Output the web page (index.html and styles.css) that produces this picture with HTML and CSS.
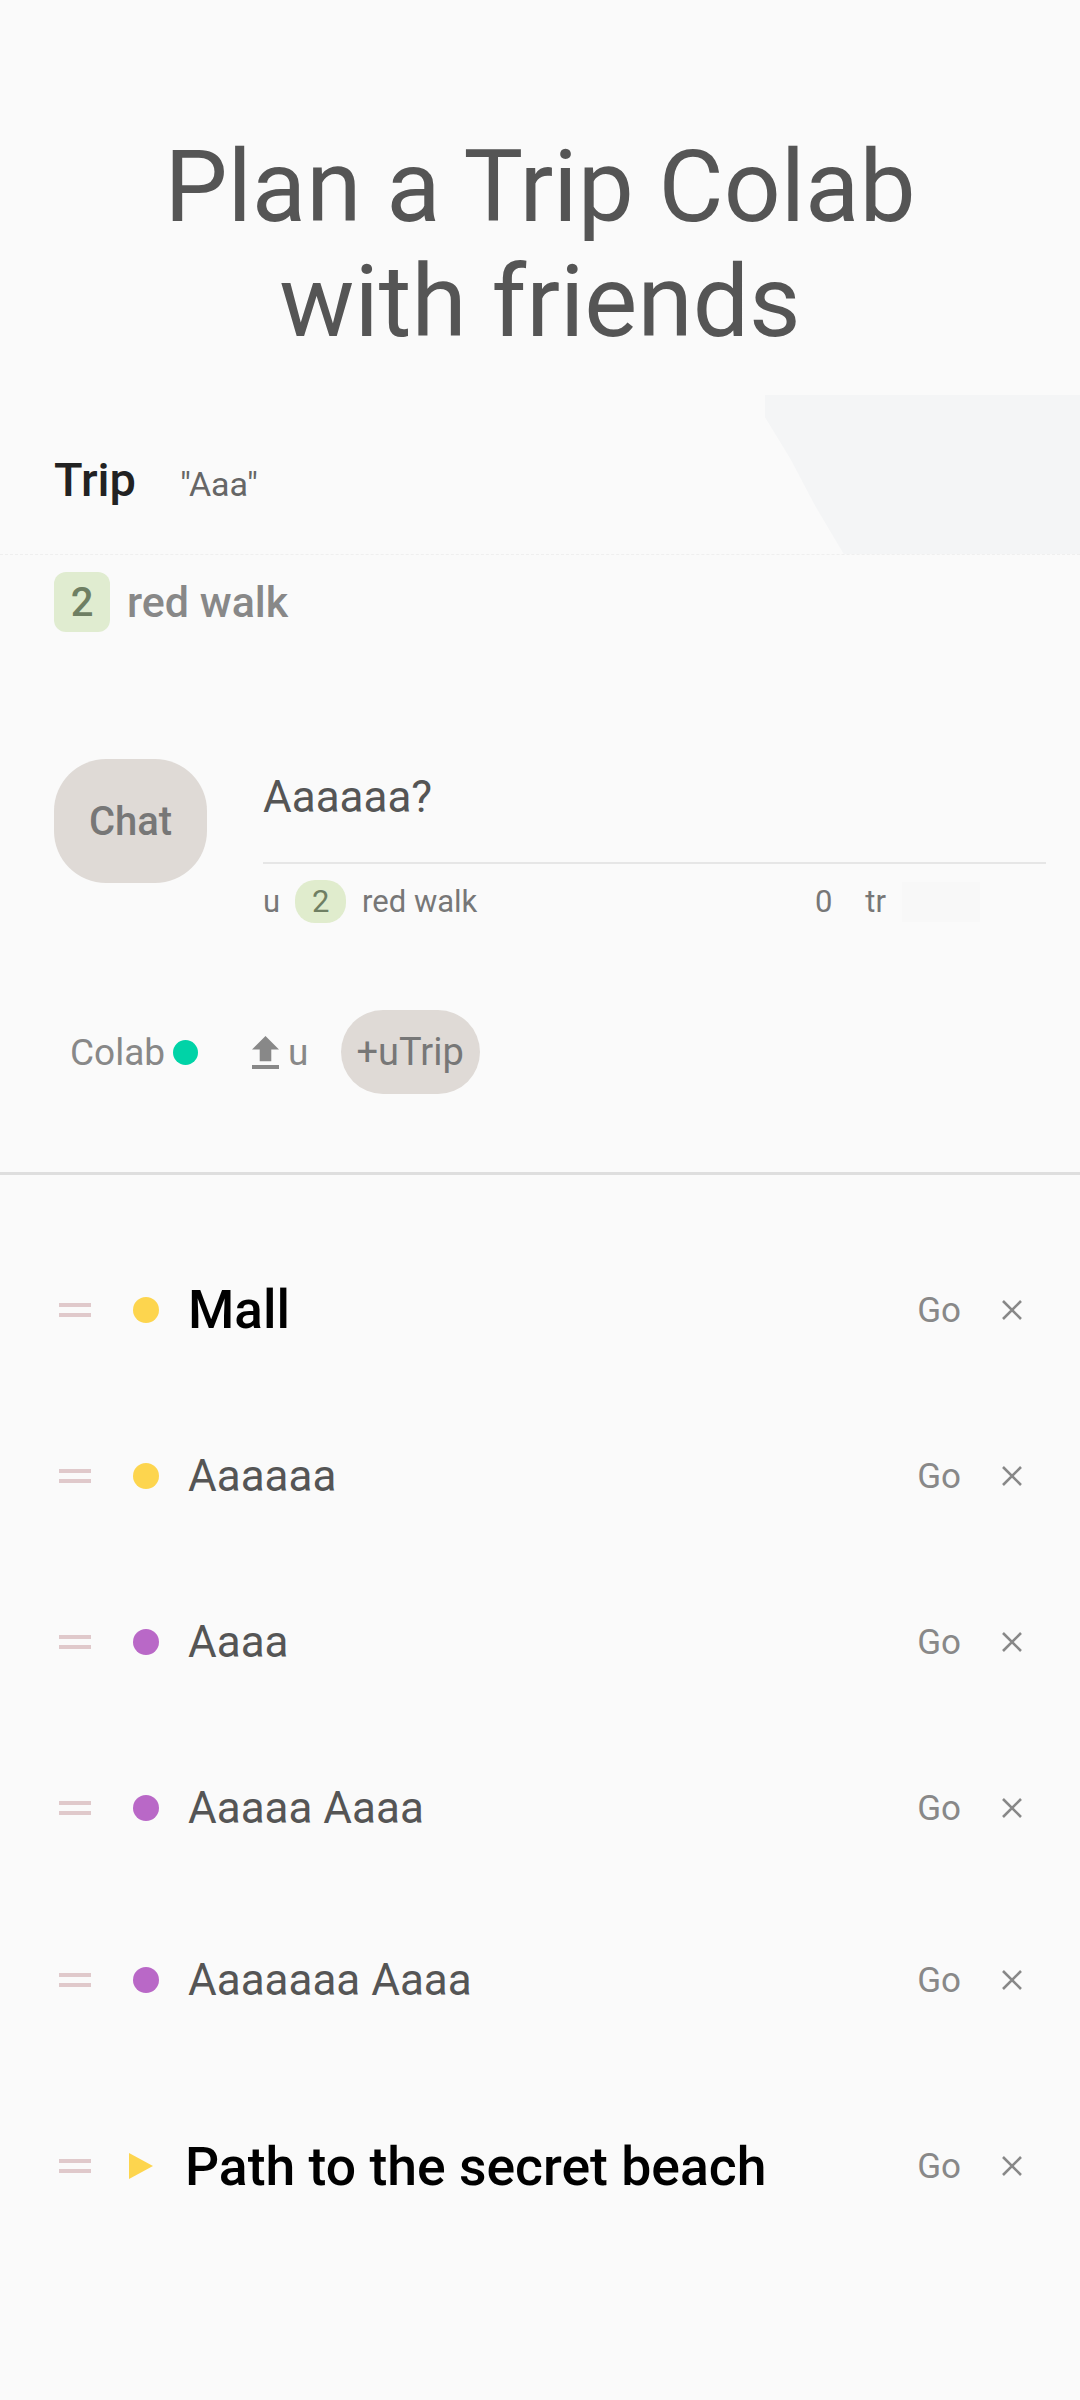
FILE: index.html
```html
<!DOCTYPE html>
<html lang="en">
<head>
<meta charset="utf-8">
<title>Plan a Trip Colab</title>
<link rel="stylesheet" href="styles.css">
</head>
<body>
<main class="page">
  <h1 class="title">Plan a Trip Colab<br>with friends</h1>

  <section class="trip">
    <div class="trip-inner">
      <span class="trip-label">Trip</span>
      <span class="trip-name">"Aaa"</span>
    </div>
  </section>

  <div class="route">
    <span class="num">2</span>
    <span class="route-name">red walk</span>
  </div>

  <div class="chat-row">
    <button class="chat-btn">Chat</button>
    <div class="chat-col">
      <div class="chat-input">Aaaaaa?</div>
      <div class="chat-meta">
        <span>u</span>
        <span class="num-sm">2</span>
        <span class="meta-route">red walk</span>
        <span class="meta-count">0</span>
        <span class="meta-tr">tr</span>
        <span class="meta-blank"></span>
      </div>
    </div>
  </div>

  <div class="actions">
    <span class="colab">Colab</span>
    <span class="live-dot"></span>
    <svg class="upload" viewBox="5 3 14 17" width="27" height="33" aria-hidden="true"><path d="M9 16h6v-6h4l-7-7-7 7h4zm-4 2h14v2H5z" fill="#888"/></svg>
    <span class="upload-u">u</span>
    <span class="pill">+uTrip</span>
  </div>

  <div class="divider"></div>

  <ul class="list">
    <li class="item">
      <span class="handle"></span>
      <span class="dot yellow"></span>
      <span class="name strong">Mall</span>
      <span class="go">Go</span>
      <svg class="close" viewBox="0 0 22 22" width="22" height="22" aria-hidden="true"><path d="M2 2L20 20M20 2L2 20" stroke="#888" stroke-width="2.6" fill="none"/></svg>
    </li>
    <li class="item">
      <span class="handle"></span>
      <span class="dot yellow"></span>
      <span class="name">Aaaaaa</span>
      <span class="go">Go</span>
      <svg class="close" viewBox="0 0 22 22" width="22" height="22" aria-hidden="true"><path d="M2 2L20 20M20 2L2 20" stroke="#888" stroke-width="2.6" fill="none"/></svg>
    </li>
    <li class="item">
      <span class="handle"></span>
      <span class="dot purple"></span>
      <span class="name">Aaaa</span>
      <span class="go">Go</span>
      <svg class="close" viewBox="0 0 22 22" width="22" height="22" aria-hidden="true"><path d="M2 2L20 20M20 2L2 20" stroke="#888" stroke-width="2.6" fill="none"/></svg>
    </li>
    <li class="item">
      <span class="handle"></span>
      <span class="dot purple"></span>
      <span class="name">Aaaaa Aaaa</span>
      <span class="go">Go</span>
      <svg class="close" viewBox="0 0 22 22" width="22" height="22" aria-hidden="true"><path d="M2 2L20 20M20 2L2 20" stroke="#888" stroke-width="2.6" fill="none"/></svg>
    </li>
    <li class="item fifth">
      <span class="handle"></span>
      <span class="dot purple"></span>
      <span class="name">Aaaaaaa Aaaa</span>
      <span class="go">Go</span>
      <svg class="close" viewBox="0 0 22 22" width="22" height="22" aria-hidden="true"><path d="M2 2L20 20M20 2L2 20" stroke="#888" stroke-width="2.6" fill="none"/></svg>
    </li>
    <li class="item last">
      <span class="handle"></span>
      <span class="tri"></span>
      <span class="name strong path">Path to the secret beach</span>
      <span class="go">Go</span>
      <svg class="close" viewBox="0 0 22 22" width="22" height="22" aria-hidden="true"><path d="M2 2L20 20M20 2L2 20" stroke="#888" stroke-width="2.6" fill="none"/></svg>
    </li>
  </ul>
</main>
</body>
</html>
```

FILE: styles.css
```css
html, body {
  margin: 0;
  padding: 0;
  background: #fafafa;
}

body {
  font-family: Roboto, "Noto Sans", "Liberation Sans", sans-serif;
  color: #555;
}

.page {
  width: 1080px;
  height: 2400px;
  overflow: hidden;
  padding-top: 129px;
  box-sizing: border-box;
}

.title {
  margin: 0;
  font-size: 100px;
  line-height: 115px;
  font-weight: 400;
  color: #555;
  text-align: center;
}

/* Trip header */
.trip {
  position: relative;
  margin-top: 36px;
  height: 160px;
  box-sizing: border-box;
  padding: 12px 0 0 54px;
  display: flex;
  align-items: center;
  border-bottom: 1px dashed #efefef;
}

.trip::after {
  content: "";
  position: absolute;
  top: 0;
  right: 0;
  bottom: 0;
  width: 315px;
  background: #f4f5f6;
  clip-path: polygon(0 0, 100% 0, 100% 100%, 25% 100%, 16% 70%, 8% 40%, 0 14%);
}

.trip-inner {
  display: flex;
  align-items: baseline;
  gap: 44px;
}

.trip-label {
  font-size: 47px;
  line-height: 46px;
  font-weight: 500;
  color: #222;
}

.trip-name {
  font-size: 34px;
  color: #666;
}

/* route badge */
.route {
  margin-top: 17px;
  height: 60px;
  display: flex;
  align-items: center;
  padding-left: 54px;
  gap: 17px;
}

.num {
  width: 56px;
  height: 60px;
  border-radius: 12px;
  background: #e0ecd0;
  color: #6f7f63;
  font-size: 40px;
  font-weight: 500;
  display: flex;
  align-items: center;
  justify-content: center;
}

.route-name {
  font-size: 43px;
  font-weight: 500;
  color: #888;
}

/* chat */
.chat-row {
  margin-top: 127px;
  display: flex;
  align-items: flex-start;
  padding: 0 34px 0 54px;
  gap: 56px;
}

.chat-btn {
  flex: none;
  width: 153px;
  height: 124px;
  border: 0;
  border-radius: 52px;
  background: #dfdad6;
  color: #777;
  font-family: Roboto, "Noto Sans", sans-serif;
  font-size: 40px;
  font-weight: 500;
  padding: 0;
}

.chat-col {
  flex: 1;
  padding-top: 8px;
}

.chat-input {
  font-size: 44px;
  line-height: 60px;
  color: #555;
  padding-bottom: 35px;
  border-bottom: 2px solid #e6e6e6;
}

.chat-meta {
  margin-top: 16px;
  height: 43px;
  display: flex;
  align-items: center;
  font-size: 31px;
  color: #777;
  padding-right: 66px;
}

.num-sm {
  margin-left: 15px;
  width: 51px;
  height: 43px;
  border-radius: 20px;
  background: #e0eccd;
  color: #6f7f63;
  display: flex;
  align-items: center;
  justify-content: center;
}

.meta-route { margin-left: 16px; }
.meta-count { margin-left: auto; }
.meta-tr { margin-left: 33px; }

.meta-blank {
  margin-left: 16px;
  width: 78px;
  height: 40px;
  background: #f8f8f8;
}

/* actions */
.actions {
  margin-top: 87px;
  height: 84px;
  display: flex;
  align-items: center;
  padding-left: 70px;
  font-size: 37px;
  color: #888;
}

.live-dot {
  margin-left: 8px;
  width: 25px;
  height: 25px;
  border-radius: 50%;
  background: #00d3a7;
}

.upload {
  margin-left: 54px;
}

.upload-u {
  margin-left: 9px;
}

.pill {
  margin-left: 32px;
  height: 84px;
  padding: 0 16px;
  border-radius: 42px;
  background: #dfdad6;
  color: #777;
  font-size: 38px;
  display: flex;
  align-items: center;
}

.divider {
  margin-top: 78px;
  height: 3px;
  background: #dedede;
}

/* list */
.list {
  list-style: none;
  margin: 0;
  padding: 52px 0 0;
}

.item {
  height: 166px;
  display: flex;
  align-items: center;
  padding: 0 57px 0 59px;
}

.item.fifth {
  margin-top: 6px;
}

.item.last {
  margin-top: 20px;
}

.handle {
  flex: none;
  width: 32px;
  height: 6px;
  border-top: 4px solid #e0c9cb;
  border-bottom: 4px solid #e0c9cb;
}

.dot {
  flex: none;
  margin-left: 42px;
  width: 26px;
  height: 26px;
  border-radius: 50%;
}

.dot.yellow { background: #fdd54e; }
.dot.purple { background: #b968c7; }

.tri {
  flex: none;
  margin-left: 38px;
  width: 24px;
  height: 26px;
  background: #fdd54e;
  clip-path: polygon(0 0, 100% 50%, 0 100%);
}

.name {
  flex: 1;
  margin-left: 29px;
  font-size: 44px;
  color: #555;
}

.name.strong {
  font-size: 53px;
  font-weight: 500;
  color: #000;
}

.name.path {
  margin-left: 32px;
  font-size: 53.5px;
}

.go {
  font-size: 35px;
  color: #888;
  margin-right: 40px;
}

.close {
  flex: none;
}
```
